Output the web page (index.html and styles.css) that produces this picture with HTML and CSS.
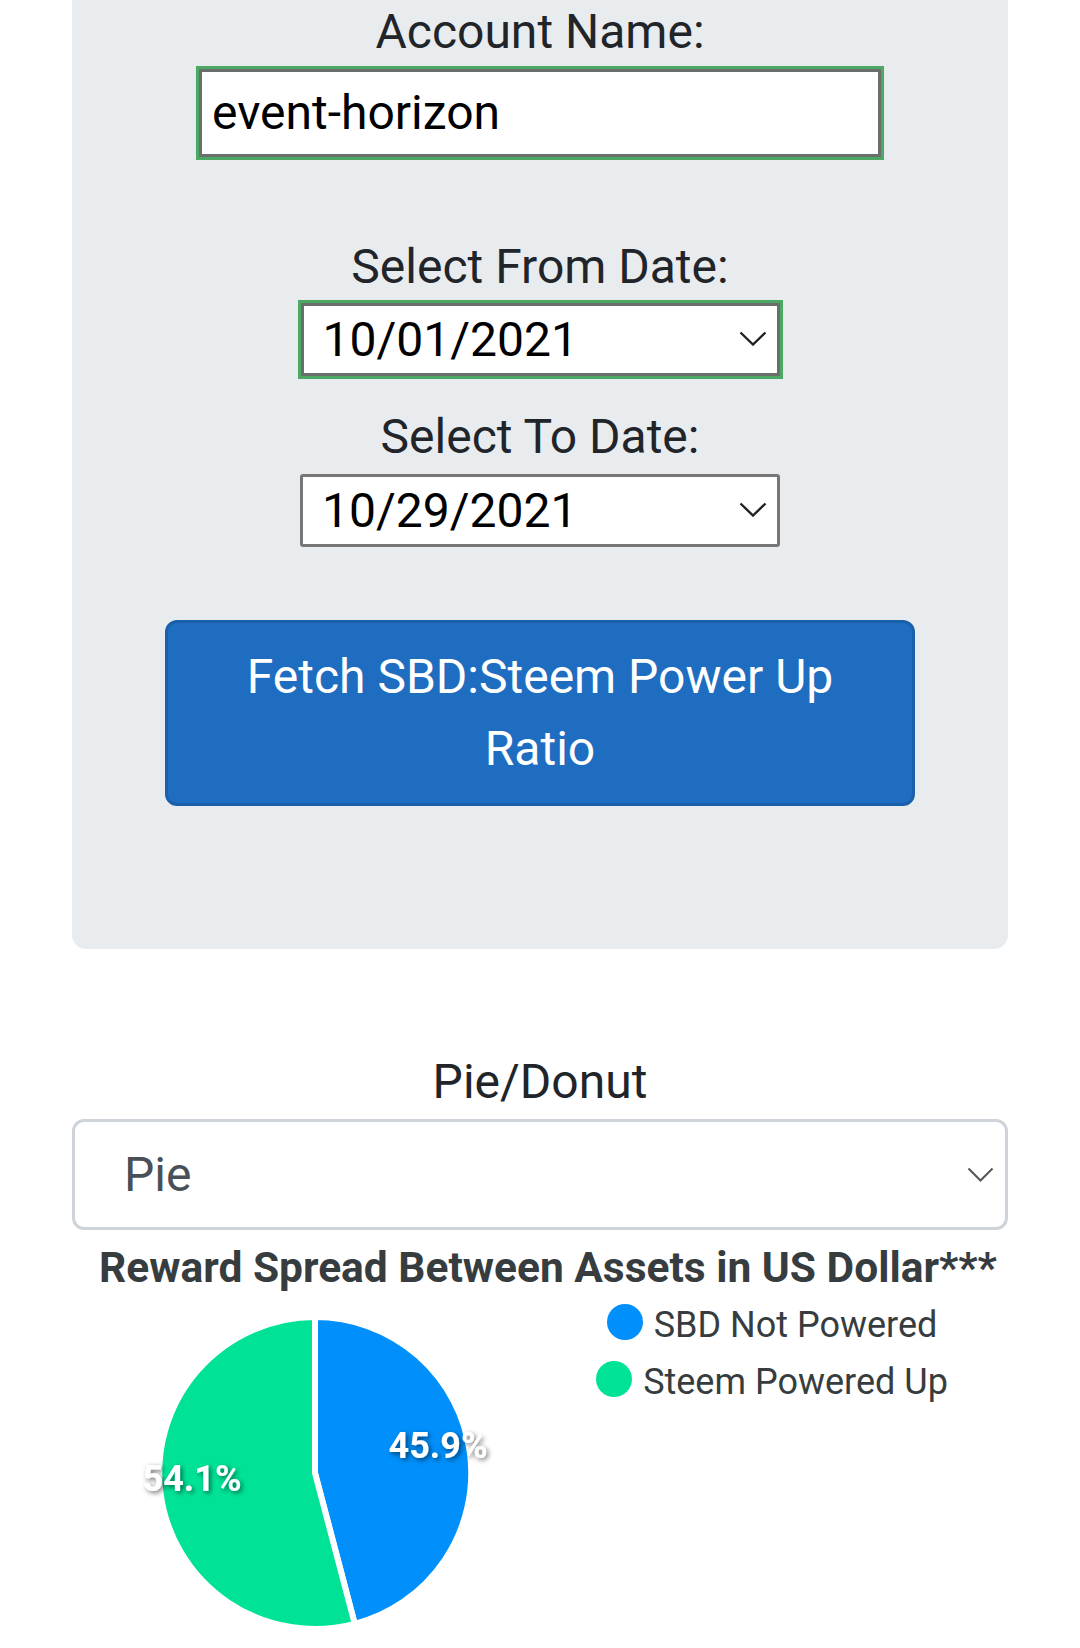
FILE: index.html
```html
<!DOCTYPE html>
<html lang="en">
<head>
<meta charset="utf-8">
<title>SBD:Steem Power Up Ratio</title>
<link rel="stylesheet" href="styles.css">
</head>
<body>
<div class="panel">
  <div class="label">Account Name:</div>
  <div class="text-input focused">event-horizon</div>

  <div class="label label-from">Select From Date:</div>
  <div class="date-select focused from">
    <span>10/01/2021</span>
    <svg class="chev" width="28" height="15" viewBox="0 0 28 15"><polyline points="1.5,1.5 14,13.5 26.5,1.5" fill="none" stroke="#222" stroke-width="2.4"/></svg>
  </div>

  <div class="label label-to">Select To Date:</div>
  <div class="date-select to">
    <span>10/29/2021</span>
    <svg class="chev" width="28" height="15" viewBox="0 0 28 15"><polyline points="1.5,1.5 14,13.5 26.5,1.5" fill="none" stroke="#222" stroke-width="2.4"/></svg>
  </div>

  <button class="fetch-btn">Fetch SBD:Steem Power Up Ratio</button>
</div>

<div class="label label-pie">Pie/Donut</div>
<div class="type-select">
  <span>Pie</span>
  <svg class="chev-light" width="27" height="15" viewBox="0 0 27 15"><polyline points="1.5,1.5 13.5,13.5 25.5,1.5" fill="none" stroke="#555" stroke-width="2"/></svg>
</div>

<div class="chart-title">Reward Spread Between Assets in US Dollar***</div>
<div class="chart">
  <svg class="pie" width="486" height="356" viewBox="0 0 486 356">
    <defs>
      <filter id="ds" x="-20%" y="-40%" width="140%" height="180%">
        <feDropShadow dx="2" dy="2" stdDeviation="2.5" flood-color="#000" flood-opacity="0.55"/>
      </filter>
    </defs>
    <path d="M243,181 L243,25 A156,156 0 0 1 282.8,331.9 Z" fill="#008ffb" stroke="#fff" stroke-width="6" stroke-linejoin="round"/>
    <path d="M243,181 L282.8,331.9 A156,156 0 1 1 243,25 Z" fill="#00e396" stroke="#fff" stroke-width="6" stroke-linejoin="round"/>
    <text class="pie-label" x="366" y="166" text-anchor="middle" filter="url(#ds)">45.9%</text>
    <text class="pie-label" x="120" y="199" text-anchor="middle" filter="url(#ds)">54.1%</text>
  </svg>
  <div class="legend">
    <div class="legend-item"><span class="marker blue"></span><span class="legend-text">SBD Not Powered</span></div>
    <div class="legend-item"><span class="marker green"></span><span class="legend-text">Steem Powered Up</span></div>
  </div>
</div>
</body>
</html>
```
FILE: styles.css
```css
* { box-sizing: border-box; }

html, body {
  margin: 0;
  padding: 0;
  background: #ffffff;
  font-family: Roboto, "Liberation Sans", sans-serif;
  color: #212529;
}

body {
  width: 1080px;
  height: 1648px;
  overflow: hidden;
}

.panel {
  margin-left: 72px;
  width: 936px;
  background: #e9ecef;
  border-radius: 0 0 14px 14px;
  padding: 0 0 143px;
  display: flex;
  flex-direction: column;
  align-items: center;
}

.label {
  font-size: 48px;
  line-height: 64px;
  height: 64px;
  text-align: center;
  color: #212529;
  white-space: nowrap;
}

.focused {
  box-shadow: 0 0 0 3px #4ca964;
}

.text-input {
  margin-top: 5px;
  width: 682px;
  height: 88px;
  border: 3px solid #6a6f6b;
  background: #fff;
  font-size: 48px;
  line-height: 82px;
  padding-left: 10px;
  color: #000;
}

.label-from { margin-top: 78px; }

.date-select {
  display: flex;
  align-items: center;
  justify-content: space-between;
  background: #fff;
  font-size: 48px;
  color: #000;
  height: 73px;
}

.date-select.from {
  margin-top: 4px;
  width: 479px;
  border: 3px solid #6a6f6b;
  padding: 0 10px 0 19px;
}

.label-to { margin-top: 29px; }

.date-select.to {
  margin-top: 5px;
  width: 480px;
  border: 3px solid #767676;
  border-radius: 3px;
  padding: 0 10px 0 19px;
}

.chev { display: block; margin-top: -2px; }

.fetch-btn {
  margin-top: 73px;
  width: 750px;
  height: 186px;
  background: #1f6dc1;
  border: 3px solid #1b60aa;
  border-radius: 12px;
  color: #fff;
  font-family: Roboto, "Liberation Sans", sans-serif;
  font-size: 48px;
  line-height: 72px;
  padding: 18px 36px;
  text-align: center;
}

.label-pie {
  margin-top: 101px;
}

.type-select {
  margin: 5px 0 0 72px;
  width: 936px;
  height: 111px;
  border: 3px solid #ced4da;
  border-radius: 12px;
  background: #fff;
  display: flex;
  align-items: center;
  justify-content: space-between;
  padding: 0 11px 0 49px;
  font-size: 48px;
  color: #495057;
}

.chev-light { display: block; }

.chart-title {
  margin-top: 16px;
  padding-left: 88px;
  width: 1008px;
  text-align: center;
  font-weight: 700;
  font-size: 42.5px;
  line-height: 44px;
  color: #373d3f;
  white-space: nowrap;
}

.chart {
  display: flex;
  margin-left: 72px;
  margin-top: 2px;
  width: 936px;
}

.pie { display: block; flex: none; }

.pie-label {
  font-family: Roboto, "Liberation Sans", sans-serif;
  font-weight: 700;
  font-size: 36px;
  fill: #fff;
}

.legend {
  width: 428px;
  padding-top: 3px;
  display: flex;
  flex-direction: column;
  align-items: center;
}

.legend-item {
  display: flex;
  align-items: flex-start;
  height: 57px;
}

.marker {
  width: 36px;
  height: 36px;
  border-radius: 50%;
  margin-top: 9px;
  margin-right: 11px;
  flex: none;
}

.marker.blue { background: #008ffb; }
.marker.green { background: #00e396; }

.legend-text {
  font-size: 36px;
  line-height: 57px;
  padding-top: 2px;
  color: #373d3f;
  white-space: nowrap;
}
```
